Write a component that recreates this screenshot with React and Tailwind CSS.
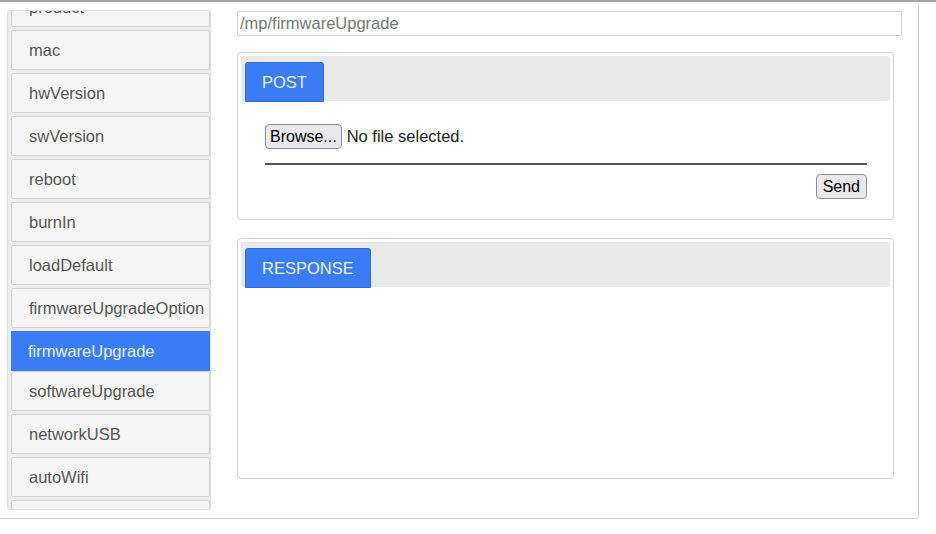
const endpoints = [
  "product",
  "mac",
  "hwVersion",
  "swVersion",
  "reboot",
  "burnIn",
  "loadDefault",
  "firmwareUpgradeOption",
  "firmwareUpgrade",
  "softwareUpgrade",
  "networkUSB",
  "autoWifi",
  "factoryReset",
];

const active = "firmwareUpgrade";

const TabBar = ({ label }) => (
  <div className="flex h-[45px] items-end rounded-[3px] bg-[#e9e9e9] pl-[4px]">
    <div className="mb-[-1px] flex h-[40px] items-center rounded-t-[3px] border border-[#2f6bd9] bg-[#3a7cf6] px-[16px] text-[16.5px] text-[#eaf1ff]">
      {label}
    </div>
  </div>
);

const App = () => {
  return (
    <div className="h-[534px] w-[936px] overflow-hidden bg-white font-['Liberation_Sans',Arial,sans-serif]">
      <div className="h-[2px] w-full bg-[#a3a3a3]" />
      <div className="ml-[-10px] flex h-[517px] w-[929px] rounded-br-[4px] rounded-tr-[4px] border border-t-0 border-[#cfcfcf] pl-[16px] pt-[8px]">
        {/* endpoint list, scrolled a little past the first entry */}
        <div className="h-[500px] w-[204px] shrink-0 overflow-hidden rounded-[3px] border border-[#dcdcdc] bg-[#ececec] pl-[3px]">
          <div className="mt-[-24px]">
            {endpoints.map((name) =>
              name === active ? (
                <div
                  key={name}
                  className="flex h-[40px] w-[199px] items-center bg-[#3a7cf6] px-[17px] text-[16.5px] text-[#eaf1ff]"
                >
                  {name}
                </div>
              ) : (
                <div
                  key={name}
                  className="mb-[3px] flex h-[40px] w-[199px] items-center rounded-[2px] border border-[#d2d2d2] bg-[#f5f5f5] px-[17px] text-[16.5px] text-[#555]"
                >
                  {name}
                </div>
              )
            )}
          </div>
        </div>

        <div className="ml-[26px] flex flex-col pt-[1px]">
          <div className="flex h-[25px] w-[665px] items-center rounded-[2px] border border-[#cfcfcf] px-[2px] text-[16.5px] text-[#777]">
            /mp/firmwareUpgrade
          </div>

          <div className="mt-[16px] h-[168px] w-[657px] rounded-[4px] border border-[#cfcfcf] p-[3px]">
            <TabBar label="POST" />
            <div className="px-[23px] pt-[23px]">
              <div className="flex items-center gap-[5px] text-[16.5px] text-[#222]">
                <button className="ml-[1px] h-[25px] rounded-[4px] border border-[#8f8f9d] bg-[#e9e9ed] px-[4px] text-[16px] text-black">
                  Browse...
                </button>
                <span>No file selected.</span>
              </div>
              <div className="mt-[14px] ml-[1px] h-[2px] bg-[#555]" />
              <div className="mt-[9px] flex justify-end">
                <button className="h-[25px] rounded-[4px] border border-[#8f8f9d] bg-[#e9e9ed] px-[6px] text-[16px] text-black">
                  Send
                </button>
              </div>
            </div>
          </div>

          <div className="mt-[18px] h-[241px] w-[657px] rounded-[4px] border border-[#cfcfcf] p-[3px]">
            <TabBar label="RESPONSE" />
          </div>
        </div>
      </div>
    </div>
  );
};

export default App;
